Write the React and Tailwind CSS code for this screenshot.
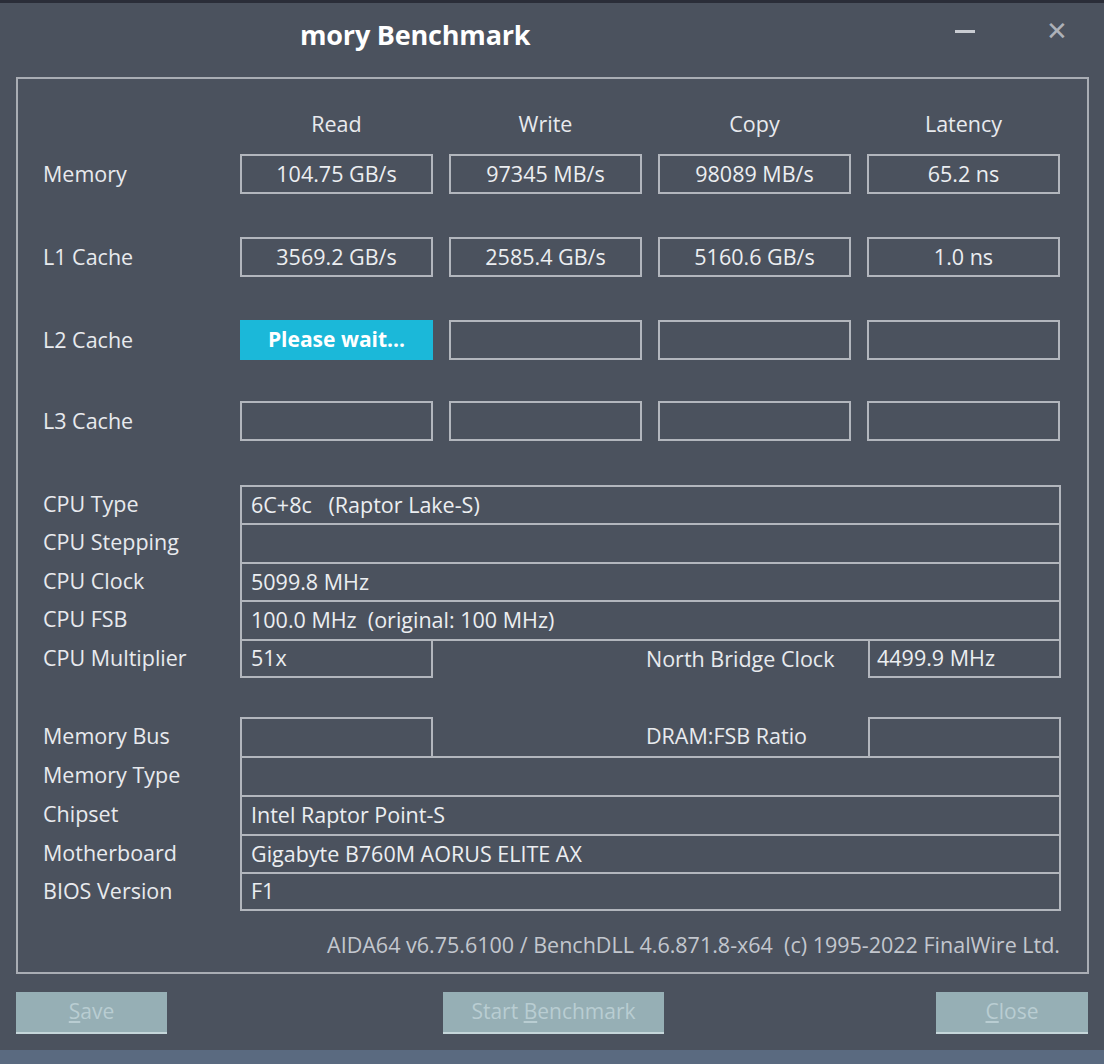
import React from "react";

const font = { fontFamily: '"Open Sans", "Noto Sans", sans-serif' };

function Box({ children, className = "" }) {
  return (
    <div className={`h-[40px] border-2 border-[#b2b6bd] flex items-center justify-center text-[21.5px] text-[#eceef1] ${className}`}>
      {children}
    </div>
  );
}

function InfoRow({ label, children, h }) {
  return (
    <div className={`flex ${h}`}>
      <div className="w-[197px] flex items-center text-[21.5px] text-[#e8eaee]">{label}</div>
      {children}
    </div>
  );
}

function FullCell({ text, last }) {
  return (
    <div className={`w-[821px] border-x-2 border-t-2 ${last ? "border-b-2" : ""} border-[#b2b6bd] flex items-center pl-[9px] text-[21.5px] text-[#eceef1]`}>
      {text}
    </div>
  );
}

export default function App() {
  const rows = [
    { label: "Memory", vals: ["104.75 GB/s", "97345 MB/s", "98089 MB/s", "65.2 ns"], mt: "mt-0" },
    { label: "L1 Cache", vals: ["3569.2 GB/s", "2585.4 GB/s", "5160.6 GB/s", "1.0 ns"], mt: "mt-[43px]" },
    { label: "L2 Cache", vals: ["wait", "", "", ""], mt: "mt-[43px]" },
    { label: "L3 Cache", vals: ["", "", "", ""], mt: "mt-[41px]" },
  ];
  return (
    <div style={font} className="w-[1104px] h-[1064px] bg-[#4b525e] relative overflow-hidden flex flex-col">
      <div className="h-[3px] bg-[#2a2d38]" />
      {/* title bar */}
      <div className="h-[74px] flex items-start relative">
        <div className="absolute left-[300px] top-[12px] text-[27px] font-bold text-white tracking-[-0.2px]">mory Benchmark</div>
        <div className="absolute left-[955px] top-[27px] w-[20px] h-[3px] bg-[#c9ccd2]" />
        <div className="absolute left-[1046px] top-[15px] text-[26px] text-[#d7dadf] opacity-70 leading-none" style={{ fontFamily: '"DejaVu Sans", sans-serif' }}>✕</div>
      </div>
      {/* group box */}
      <div className="mx-[16px] w-[1073px] h-[897px] border-2 border-[#a9adb4] pl-[25px] pt-[30px] flex flex-col">
        {/* headers */}
        <div className="flex h-[30px] items-center">
          <div className="w-[197px]" />
          <div className="flex gap-[16px]">
            {["Read", "Write", "Copy", "Latency"].map((h) => (
              <div key={h} className="w-[193px] text-center text-[21.5px] text-[#e8eaee]">{h}</div>
            ))}
          </div>
        </div>
        <div className="mt-[15px] flex flex-col">
          {rows.map((r) => (
            <div key={r.label} className={`flex items-center ${r.mt}`}>
              <div className="w-[197px] text-[21.5px] text-[#e8eaee]">{r.label}</div>
              <div className="flex gap-[16px]">
                {r.vals.map((v, i) =>
                  v === "wait" ? (
                    <div key={i} className="w-[193px] h-[40px] bg-[#1bb8d9] flex items-center justify-center text-[21px] font-bold text-white">Please wait...</div>
                  ) : (
                    <Box key={i} className="w-[193px]">{v}</Box>
                  )
                )}
              </div>
            </div>
          ))}
        </div>
        {/* CPU info */}
        <div className="mt-[44px] flex flex-col">
          <InfoRow h="h-[38px]" label="CPU Type"><FullCell text={<span>6C+8c&nbsp;&nbsp;&nbsp;(Raptor Lake-S)</span>} /></InfoRow>
          <InfoRow h="h-[39px]" label="CPU Stepping"><FullCell text="" /></InfoRow>
          <InfoRow h="h-[38px]" label="CPU Clock"><FullCell text="5099.8 MHz" /></InfoRow>
          <InfoRow h="h-[39px]" label="CPU FSB"><FullCell text={<span>100.0 MHz&nbsp;&nbsp;(original: 100 MHz)</span>} /></InfoRow>
          <InfoRow h="h-[39px]" label="CPU Multiplier">
            <div className="flex w-[821px] border-t-2 border-[#b2b6bd]">
              <div className="w-[193px] border-x-2 border-b-2 border-[#b2b6bd] flex items-center pl-[9px] text-[21.5px] text-[#eceef1]">51x</div>
              <div className="flex-1 flex items-center pl-[213px] text-[21.5px] text-[#e8eaee]">North Bridge Clock</div>
              <div className="w-[193px] border-x-2 border-b-2 border-[#b2b6bd] flex items-center pl-[7px] text-[21.5px] text-[#eceef1]">4499.9 MHz</div>
            </div>
          </InfoRow>
        </div>
        <div className="mt-[39px] flex flex-col">
          <InfoRow h="h-[39px]" label="Memory Bus">
            <div className="flex w-[821px]">
              <div className="w-[193px] border-x-2 border-t-2 border-[#b2b6bd]" />
              <div className="flex-1 flex items-center pl-[213px] text-[21.5px] text-[#e8eaee]">DRAM:FSB Ratio</div>
              <div className="w-[193px] border-x-2 border-t-2 border-[#b2b6bd]" />
            </div>
          </InfoRow>
          <InfoRow h="h-[39px]" label="Memory Type"><FullCell text="" /></InfoRow>
          <InfoRow h="h-[39px]" label="Chipset"><FullCell text="Intel Raptor Point-S" /></InfoRow>
          <InfoRow h="h-[38px]" label="Motherboard"><FullCell text="Gigabyte B760M AORUS ELITE AX" /></InfoRow>
          <InfoRow h="h-[39px]" label="BIOS Version"><FullCell text="F1" last /></InfoRow>
        </div>
        <div className="mt-[18px] pr-[27px] text-right text-[21.5px] text-[#c3c7ce] whitespace-nowrap">
          AIDA64 v6.75.6100 / BenchDLL 4.6.871.8-x64&nbsp;&nbsp;(c) 1995-2022 FinalWire Ltd.
        </div>
      </div>
      {/* buttons */}
      <div className="mt-[18px] mx-[16px] flex justify-between items-start">
        <div className="w-[151px] h-[42px] bg-[#96afb5] border-b-2 border-[#c5d6da] flex items-center justify-center text-[21px] text-[#b9cdd2]"><span><u>S</u>ave</span></div>
        <div className="w-[221px] h-[42px] ml-[276px] bg-[#96afb5] border-b-2 border-[#c5d6da] flex items-center justify-center text-[21px] text-[#b9cdd2]"><span>Start <u>B</u>enchmark</span></div>
        <div className="flex-1" />
        <div className="w-[152px] h-[42px] bg-[#96afb5] border-b-2 border-[#c5d6da] flex items-center justify-center text-[21px] text-[#b9cdd2]"><span><u>C</u>lose</span></div>
      </div>
      <div className="flex-1" />
      <div className="h-[14px] bg-[#5a6a80]" />
    </div>
  );
}
